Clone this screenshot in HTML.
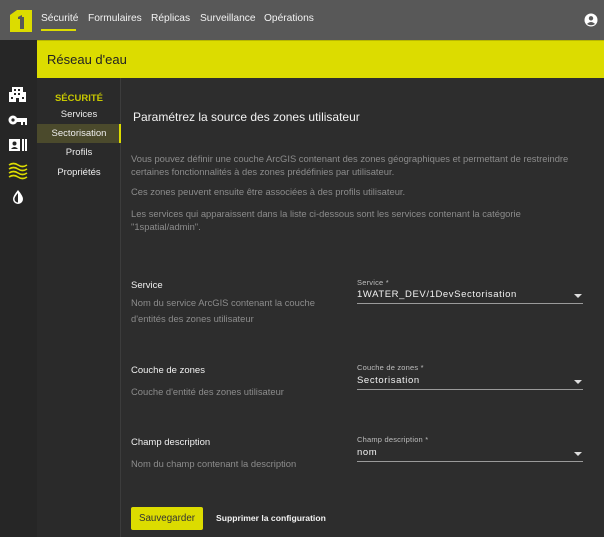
<!DOCTYPE html>
<html><head><meta charset="utf-8"><style>
*{margin:0;padding:0;box-sizing:border-box}
body{width:604px;height:537px;background:#2d2d2d;font-family:"Liberation Sans",sans-serif;position:relative;overflow:hidden;color:#fff}
.a{position:absolute;white-space:nowrap}
.top{left:0;top:0;width:604px;height:40px;background:#585858}
.tab{top:13px;font-size:10.2px;color:#f2f2f2}
.rail{left:0;top:40px;width:37px;height:497px;background:#262626}
.ban{left:37px;top:40px;width:567px;height:38px;background:#dcdc00;border-top:1px solid #b8b800}
.nav{left:37px;top:78px;width:84px;height:459px;background:#2a2a2a;border-right:1px solid #3c3c3c}
.ni{font-size:9.5px;width:84px;text-align:center;left:37px;color:#eee}
.p{font-size:9.4px;color:#8c8c8c;left:131px}
.h{font-size:9.5px;color:#f0f0f0;left:131px}
.fl{font-size:7.5px;color:#bdbdbd;left:357px;letter-spacing:.2px}
.fv{font-size:9.5px;color:#f2f2f2;left:357px;letter-spacing:.6px}
.ln{left:357px;width:226px;height:1px;background:#9a9a9a}
.ar{left:574px;width:0;height:0;border-left:4px solid transparent;border-right:4px solid transparent;border-top:4px solid #ddd}
</style></head><body>
<div class="a top"></div>
<svg class="a" style="left:10px;top:10px" width="22" height="22" viewBox="0 0 22 22"><path d="M0 5 L7 0 H22 V22 H0Z" fill="#dcdc00"/><path d="M10 7 H14 V19 H10Z M8 7 L12 5 V9 L8 9Z" fill="#585858"/></svg>
<div class="a tab" style="left:41px">Sécurité</div>
<div class="a" style="left:41px;top:29px;width:35px;height:2px;background:#dcdc00"></div>
<div class="a tab" style="left:88px">Formulaires</div>
<div class="a tab" style="left:151px">Réplicas</div>
<div class="a tab" style="left:200px">Surveillance</div>
<div class="a tab" style="left:264px">Opérations</div>
<svg class="a" style="left:584px;top:13px" width="14" height="14" viewBox="0 0 14 14"><circle cx="7" cy="7" r="6.5" fill="#fff"/><circle cx="7" cy="5.3" r="2.2" fill="#585858"/><path d="M3 11 Q7 7 11 11 Q7 13.5 3 11Z" fill="#585858"/></svg>
<div class="a rail"></div>
<svg class="a" style="left:8px;top:86px" width="20" height="120" viewBox="0 0 20 120">
<g fill="#fff"><rect x="4" y="1" width="11" height="15"/><rect x="1" y="6" width="17" height="10"/></g>
<g fill="#262626"><rect x="6" y="3" width="2" height="2"/><rect x="10" y="3" width="2" height="2"/><rect x="6" y="7" width="2" height="2"/><rect x="10" y="7" width="2" height="2"/><rect x="3" y="11" width="2" height="2"/><rect x="14" y="11" width="2" height="2"/><rect x="8" y="12" width="3" height="4"/></g>
<circle cx="5" cy="34" r="4.5" fill="#fff"/><circle cx="5" cy="34" r="1.6" fill="#262626"/><rect x="8" y="32" width="11" height="4" fill="#fff"/><rect x="13" y="36" width="2" height="3" fill="#fff"/><rect x="17" y="36" width="2" height="3" fill="#fff"/>
<rect x="1" y="53" width="11" height="12" fill="#fff"/><circle cx="6.5" cy="57.5" r="2" fill="#262626"/><path d="M3 63 Q6.5 59 10 63Z" fill="#262626"/><rect x="14" y="53" width="2" height="12" fill="#fff"/><rect x="17" y="53" width="2" height="12" fill="#fff"/>
<g fill="none" stroke="#dcdc00" stroke-width="1.6"><path d="M1 79 q4.5 -3 9 0 t9 0"/><path d="M1 83 q4.5 -3 9 0 t9 0"/><path d="M1 87 q4.5 -3 9 0 t9 0"/><path d="M1 91 q4.5 -3 9 0 t9 0"/></g>
<path d="M10 104 Q15 110 15 113 A5 5 0 0 1 5 113 Q5 110 10 104Z" fill="#fff"/><path d="M10 107 Q6.5 111 6.5 113 A3.5 3.5 0 0 0 10 116.5Z" fill="#262626"/>
</svg>
<div class="a ban"></div>
<div class="a" style="left:47px;top:52px;font-size:13px;color:#222">Réseau d'eau</div>
<div class="a nav"></div>
<div class="a ni" style="top:93px;color:#c8c800;font-weight:bold;font-size:9.5px">SÉCURITÉ</div>
<div class="a ni" style="top:109px">Services</div>
<div class="a" style="left:37px;top:124px;width:84px;height:19px;background:#4b4a2c;border-right:2px solid #dcdc00"></div>
<div class="a ni" style="top:128px">Sectorisation</div>
<div class="a ni" style="top:147px">Profils</div>
<div class="a ni" style="top:167px">Propriétés</div>
<div class="a" style="left:133px;top:110px;font-size:12px;color:#f2f2f2">Paramétrez la source des zones utilisateur</div>
<div class="a p" style="top:153px">Vous pouvez définir une couche ArcGIS contenant des zones géographiques et permettant de restreindre</div>
<div class="a p" style="top:166px">certaines fonctionnalités à des zones prédéfinies par utilisateur.</div>
<div class="a p" style="top:186px">Ces zones peuvent ensuite être associées à des profils utilisateur.</div>
<div class="a p" style="top:208px">Les services qui apparaissent dans la liste ci-dessous sont les services contenant la catégorie</div>
<div class="a p" style="top:221px">"1spatial/admin".</div>
<div class="a h" style="top:280px">Service</div>
<div class="a p" style="top:297px">Nom du service ArcGIS contenant la couche</div>
<div class="a p" style="top:313px">d'entités des zones utilisateur</div>
<div class="a fl" style="top:278px">Service *</div>
<div class="a fv" style="top:289px">1WATER_DEV/1DevSectorisation</div>
<div class="a ar" style="top:294px"></div>
<div class="a ln" style="top:303px"></div>
<div class="a h" style="top:365px">Couche de zones</div>
<div class="a p" style="top:386px">Couche d'entité des zones utilisateur</div>
<div class="a fl" style="top:363px">Couche de zones *</div>
<div class="a fv" style="top:375px">Sectorisation</div>
<div class="a ar" style="top:380px"></div>
<div class="a ln" style="top:389px"></div>
<div class="a h" style="top:437px">Champ description</div>
<div class="a p" style="top:458px">Nom du champ contenant la description</div>
<div class="a fl" style="top:435px">Champ description *</div>
<div class="a fv" style="top:447px">nom</div>
<div class="a ar" style="top:452px"></div>
<div class="a ln" style="top:461px"></div>
<div class="a" style="left:131px;top:507px;width:72px;height:23px;background:#dcdc00;border-radius:2px;color:#333;font-size:9.8px;text-align:center;line-height:23px">Sauvegarder</div>
<div class="a" style="left:216px;top:513px;font-size:8.6px;font-weight:bold;color:#f2f2f2">Supprimer la configuration</div>
</body></html>
